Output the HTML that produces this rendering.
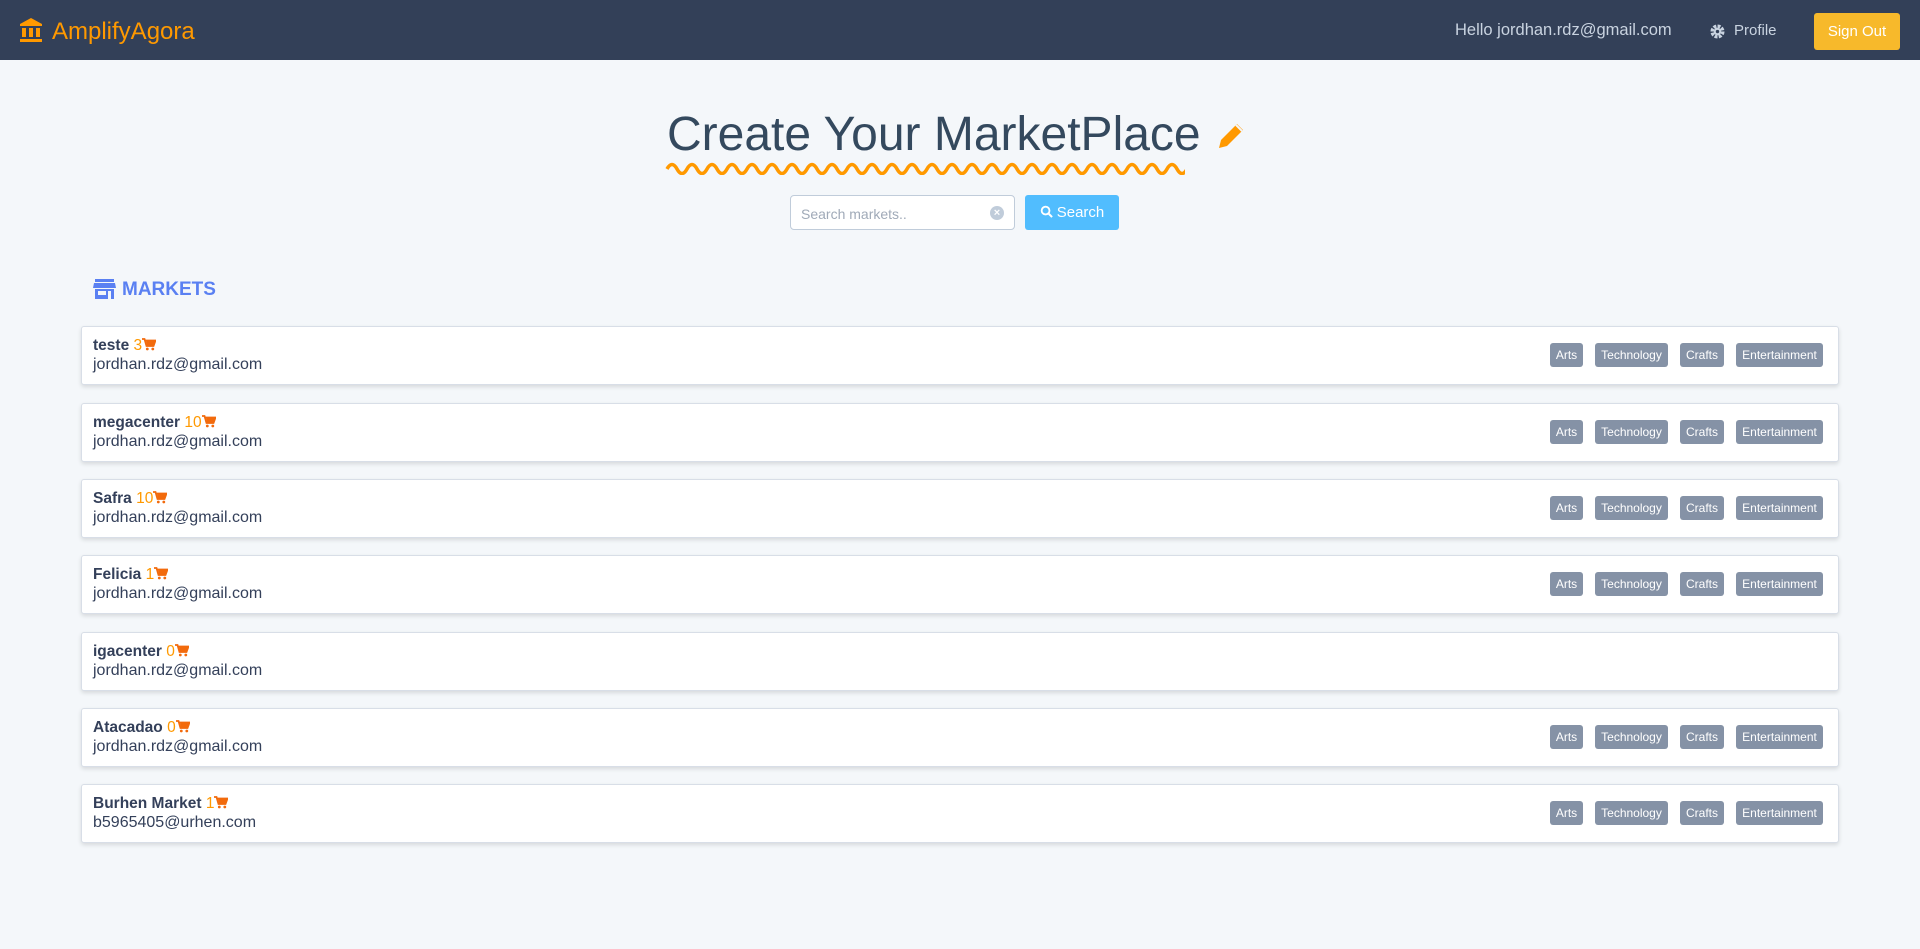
<!DOCTYPE html>
<html><head><meta charset="utf-8"><style>
*{box-sizing:border-box;margin:0;padding:0}
body{width:1920px;height:949px;background:#f4f7fa;font-family:"Liberation Sans",sans-serif;position:relative;overflow:hidden;color:#34495e}
.hdr{position:absolute;left:0;top:0;width:1920px;height:60px;background:#334058}
.logo{position:absolute;left:19px;top:17px}
.brand{position:absolute;left:52px;top:18px;font-size:24px;color:#f90}
.hello{position:absolute;left:1455px;top:21px;font-size:16.5px;color:#c9d3e0}
.prof{position:absolute;left:1734px;top:22px;font-size:15px;color:#c9d3e0}
.gear{position:absolute;left:1710px;top:24px}
.so{position:absolute;left:1814px;top:13px;width:86px;height:37px;background:#f7b92b;border-radius:3px;color:#fff;font-size:15px;text-align:center;line-height:37px}
.title{position:absolute;left:667px;top:107px;font-size:48px;color:#34495e;white-space:nowrap}
.inp{position:absolute;left:790px;top:195px;width:225px;height:35px;border:1px solid #c0ccda;border-radius:4px;background:#fff;font-size:14px;color:#a0aab8;padding:10px 10px}
.clr{position:absolute;left:990px;top:206px;width:14px;height:14px;border-radius:50%;background:#c0ccda;color:#fff;font-size:11px;line-height:14px;text-align:center;font-weight:bold}
.btn{position:absolute;left:1025px;top:195px;width:94px;height:35px;background:#51bdfe;border-radius:3px;color:#fff;font-size:15px;line-height:35px;text-align:center}
.mk{position:absolute;top:279px;font-size:19px;font-weight:bold;color:#5a80f2}
.card{position:absolute;left:81px;width:1758px;height:59px;background:#fff;border:1px solid #d8dee7;border-radius:3px;box-shadow:0 2px 4px rgba(0,0,0,.12)}
.nm{position:absolute;left:11px;top:10px;font-size:15.5px;font-weight:bold;color:#34405a}
.nm span{color:#f90;font-weight:normal}
.nm svg{vertical-align:-1px}
.em{position:absolute;left:11px;top:29px;font-size:16px;color:#34405a}
.tag{position:absolute;top:16px;height:24px;background:#8592a6;border-radius:3px;color:#fff;font-size:12px;line-height:24px;text-align:center}
</style></head><body>
<svg width="0" height="0" style="position:absolute"><defs><symbol id="cart" viewBox="0 0 14 13"><path d="M0 1h2.5l2 7h7l2-5.5H3.5" fill="none" stroke="#f26a0c" stroke-width="1.8"/><path d="M4 3h9l-1.6 4.5H5z" fill="#f26a0c"/><circle cx="5.3" cy="11" r="1.4" fill="#f26a0c"/><circle cx="10.8" cy="11" r="1.4" fill="#f26a0c"/></symbol></defs></svg>
<div class="hdr">
<svg class="logo" width="24" height="26" viewBox="0 0 24 26"><path d="M12 1L1 7v2h22V7z" fill="#f90"/><rect x="3" y="11" width="4" height="9" fill="#f90"/><rect x="10" y="11" width="4" height="9" fill="#f90"/><rect x="17" y="11" width="4" height="9" fill="#f90"/><rect x="1" y="22" width="22" height="3" fill="#f90"/></svg>
<div class="brand">AmplifyAgora</div>
<div class="hello">Hello jordhan.rdz@gmail.com</div>
<svg class="gear" width="15" height="15" viewBox="0 0 16 16"><circle cx="8" cy="8" r="5.5" fill="none" stroke="#c9d3e0" stroke-width="4" stroke-dasharray="3 1.3"/><circle cx="8" cy="8" r="4" fill="#c9d3e0"/><circle cx="8" cy="8" r="1.8" fill="#334058"/></svg>
<div class="prof">Profile</div>
<div class="so">Sign Out</div>
</div>
<div class="title">Create Your MarketPlace</div>
<svg style="position:absolute;left:1216px;top:119px" width="32" height="32" viewBox="0 0 32 32"><path d="M3 29l2-8 16-16 6 6-16 16z" fill="#f90"/><path d="M20 6l6 6" stroke="#f4f7fa" stroke-width="2"/></svg>
<svg style="position:absolute;left:665px;top:157px" width="520" height="18" viewBox="0 0 520 18"><path d="M2 12 q5-9 10 0 t10 0 t10 0 t10 0 t10 0 t10 0 t10 0 t10 0 t10 0 t10 0 t10 0 t10 0 t10 0 t10 0 t10 0 t10 0 t10 0 t10 0 t10 0 t10 0 t10 0 t10 0 t10 0 t10 0 t10 0 t10 0 t10 0 t10 0 t10 0 t10 0 t10 0 t10 0 t10 0 t10 0 t10 0 t10 0 t10 0 t10 0 t10 0 t10 0 t10 0 t10 0 t10 0 t10 0 t10 0 t10 0 t10 0 t10 0 t10 0 t10 0 t10 0 t10 0" fill="none" stroke="#f90" stroke-width="3.5"/></svg>
<div class="inp">Search markets..</div><div class="clr">×</div>
<div class="btn"><svg width="13" height="13" viewBox="0 0 14 14" style="vertical-align:-1px;margin-right:4px"><circle cx="6" cy="6" r="4.2" fill="none" stroke="#fff" stroke-width="2"/><path d="M9 9l4 4" stroke="#fff" stroke-width="2.2"/></svg>Search</div>
<svg style="position:absolute;left:93px;top:279px" width="23" height="20" viewBox="0 0 23 20"><rect x="2" y="0" width="19" height="3" fill="#5a80f2"/><path d="M1 4h21l1 5H0z" fill="#5a80f2"/><path d="M2 10h19v10H2z" fill="#5a80f2"/><rect x="5" y="12" width="8" height="4" fill="#f4f7fa"/><rect x="15" y="12" width="3" height="8" fill="#f4f7fa"/></svg>
<div class="mk" style="left:122px">MARKETS</div>

<div class="card" style="top:326px"><div class="nm">teste <span>3<svg width="14" height="13"><use href="#cart"/></svg></span></div><div class="em">jordhan.rdz@gmail.com</div>
<div class="tag" style="left:1468px;width:33px">Arts</div><div class="tag" style="left:1513px;width:73px">Technology</div><div class="tag" style="left:1598px;width:44px">Crafts</div><div class="tag" style="left:1654px;width:87px">Entertainment</div></div>
<div class="card" style="top:403px"><div class="nm">megacenter <span>10<svg width="14" height="13"><use href="#cart"/></svg></span></div><div class="em">jordhan.rdz@gmail.com</div>
<div class="tag" style="left:1468px;width:33px">Arts</div><div class="tag" style="left:1513px;width:73px">Technology</div><div class="tag" style="left:1598px;width:44px">Crafts</div><div class="tag" style="left:1654px;width:87px">Entertainment</div></div>
<div class="card" style="top:479px"><div class="nm">Safra <span>10<svg width="14" height="13"><use href="#cart"/></svg></span></div><div class="em">jordhan.rdz@gmail.com</div>
<div class="tag" style="left:1468px;width:33px">Arts</div><div class="tag" style="left:1513px;width:73px">Technology</div><div class="tag" style="left:1598px;width:44px">Crafts</div><div class="tag" style="left:1654px;width:87px">Entertainment</div></div>
<div class="card" style="top:555px"><div class="nm">Felicia <span>1<svg width="14" height="13"><use href="#cart"/></svg></span></div><div class="em">jordhan.rdz@gmail.com</div>
<div class="tag" style="left:1468px;width:33px">Arts</div><div class="tag" style="left:1513px;width:73px">Technology</div><div class="tag" style="left:1598px;width:44px">Crafts</div><div class="tag" style="left:1654px;width:87px">Entertainment</div></div>
<div class="card" style="top:632px"><div class="nm">igacenter <span>0<svg width="14" height="13"><use href="#cart"/></svg></span></div><div class="em">jordhan.rdz@gmail.com</div></div>
<div class="card" style="top:708px"><div class="nm">Atacadao <span>0<svg width="14" height="13"><use href="#cart"/></svg></span></div><div class="em">jordhan.rdz@gmail.com</div>
<div class="tag" style="left:1468px;width:33px">Arts</div><div class="tag" style="left:1513px;width:73px">Technology</div><div class="tag" style="left:1598px;width:44px">Crafts</div><div class="tag" style="left:1654px;width:87px">Entertainment</div></div>
<div class="card" style="top:784px"><div class="nm">Burhen Market <span>1<svg width="14" height="13"><use href="#cart"/></svg></span></div><div class="em">b5965405@urhen.com</div>
<div class="tag" style="left:1468px;width:33px">Arts</div><div class="tag" style="left:1513px;width:73px">Technology</div><div class="tag" style="left:1598px;width:44px">Crafts</div><div class="tag" style="left:1654px;width:87px">Entertainment</div></div>
</body></html>
